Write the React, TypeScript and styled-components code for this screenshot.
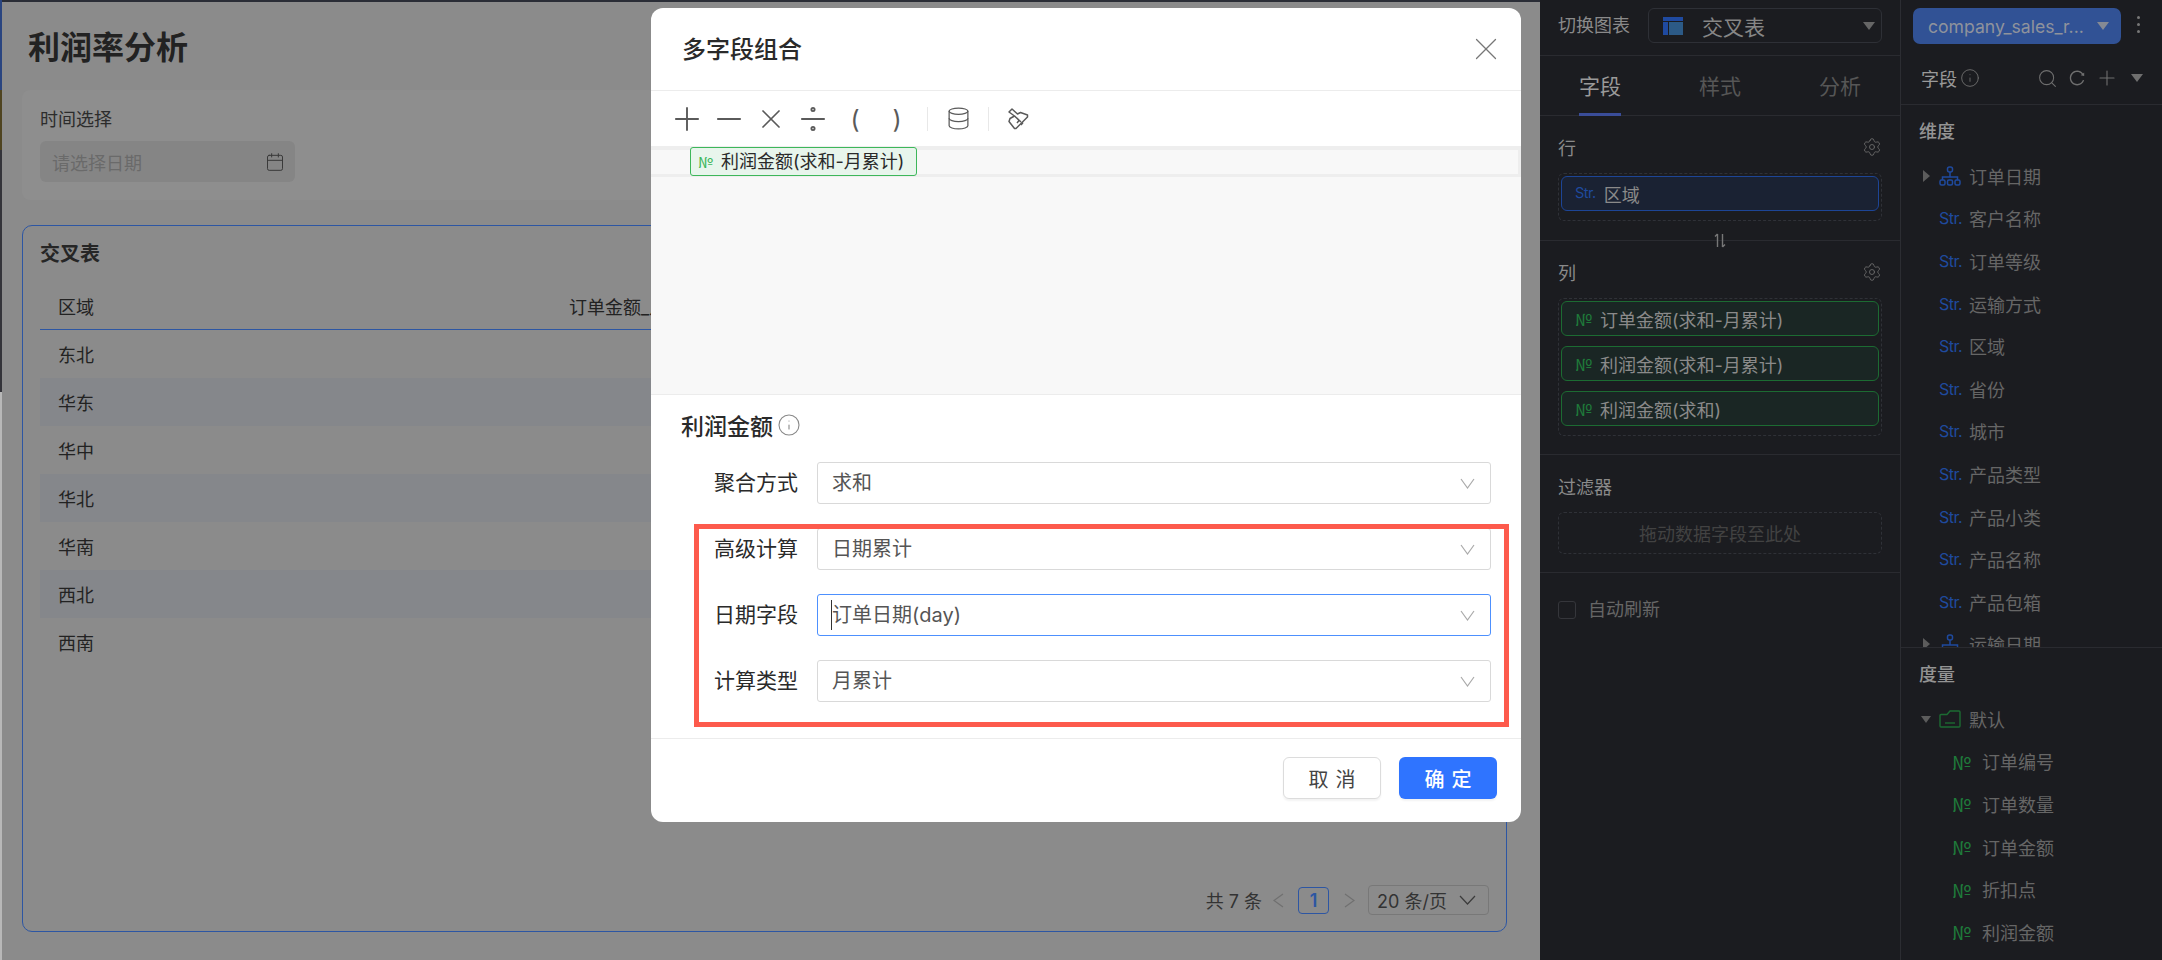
import React from 'react';
import styled, { createGlobalStyle } from 'styled-components';
import { Calendar, Database, Divide, Info, Minus, Plus, Search, Settings, X } from 'lucide-react';
import { AiOutlineReload } from 'react-icons/ai';

const GlobalStyle = createGlobalStyle`
  html, body {
    margin: 0;
    padding: 0;
    background: #1b1c20;
    font-family: Inter, 'Noto Sans CJK SC', sans-serif;
  }
  * { box-sizing: border-box; }
`;

const Page = styled.div`
  display: flex;
  width: 2162px;
  height: 960px;
  overflow: hidden;
`;

const WallpaperEdge = styled.div`
  width: 2px;
  flex: none;
  background: linear-gradient(#2a4580 0 90px, #4f4420 90px 150px, #34343a 150px 392px, #b8b8b8 392px);
`;

const Main = styled.div`
  width: 1538px;
  flex: none;
  position: relative;
  background: #8b8b8b;
  border-top: 2px solid #2a2d36;
  padding: 0 33px 0 20px;
  color: #1f1f1f;
`;

const PageTitle = styled.h1`
  margin: 28px 0 0 6px;
  font-size: 32px;
  line-height: 36px;
  font-weight: 700;
  color: #222;
`;

const FilterCard = styled.div`
  margin-top: 24px;
  height: 110px;
  background: #8e8e8e;
  border-radius: 8px;
  padding: 17px 18px;
`;

const FilterLabel = styled.div`
  font-size: 18px;
  line-height: 26px;
  color: #2c2c2c;
`;

const DateInput = styled.div`
  margin-top: 8px;
  width: 255px;
  height: 41px;
  background: #858585;
  border-radius: 6px;
  padding: 0 10px 0 12px;
  display: flex;
  align-items: center;
  justify-content: space-between;
  font-size: 18px;
  color: #6a6a6a;
  svg { color: #3a3a3a; }
`;

const TableCard = styled.div`
  margin-top: 25px;
  height: 707px;
  border: 1.5px solid #2d56a3;
  border-radius: 10px;
  padding: 13px 16px 0 17px;
  display: flex;
  flex-direction: column;
`;

const CardTitle = styled.div`
  font-size: 20px;
  line-height: 30px;
  font-weight: 700;
  color: #262626;
`;

const TableRow = styled.div<{ $head?: boolean; $striped?: boolean }>`
  display: grid;
  grid-template-columns: 511px 1fr;
  flex: none;
  height: ${p => (p.$head ? '61px' : '48px')};
  padding: ${p => (p.$head ? '13px' : '0')} 0 0 18px;
  align-items: center;
  font-size: 18px;
  color: #222;
  background: ${p => (p.$striped ? '#85878b' : 'transparent')};
  border-bottom: ${p => (p.$head ? '1.5px solid #2d56a3' : 'none')};
`;

const Pagination = styled.div`
  margin-top: auto;
  margin-bottom: 16px;
  display: flex;
  align-items: center;
  justify-content: flex-end;
  font-size: 18px;
  color: #333;
  padding-right: 1px;
`;

const PageArrow = styled.span`
  width: 22px;
  display: flex;
  justify-content: center;
  color: #707070;
  margin: 0 5px;
`;

const PageNumber = styled.span`
  width: 31px;
  height: 27px;
  border: 1.5px solid #2d56a3;
  border-radius: 4px;
  display: flex;
  align-items: center;
  justify-content: center;
  color: #2d56a3;
  font-weight: 600;
  margin: 0 4px;
`;

const PageSize = styled.span`
  width: 121px;
  height: 30px;
  margin-left: 3px;
  border: 1px solid #787878;
  border-radius: 4px;
  padding: 0 12px 0 8px;
  display: flex;
  align-items: center;
  justify-content: space-between;
  svg { color: #3c3c3c; }
`;

const Modal = styled.div`
  position: absolute;
  top: 6px;
  left: 649px;
  width: 870px;
  height: 814px;
  background: #fff;
  border-radius: 12px;
  display: flex;
  flex-direction: column;
  overflow: hidden;
`;

const ModalHeader = styled.div`
  height: 83px;
  flex: none;
  padding: 0 16px 0 31px;
  border-bottom: 1px solid #ececec;
  display: flex;
  align-items: center;
  justify-content: space-between;
  svg { color: #777; }
`;

const ModalTitle = styled.div`
  font-size: 24px;
  line-height: 32px;
  font-weight: 500;
  color: #2a2a2a;
  margin-top: 1px;
`;

const Toolbar = styled.div`
  height: 55px;
  flex: none;
  padding-left: 15px;
  display: flex;
  align-items: center;
  color: #5a5a5a;
`;

const ToolButton = styled.span<{ $width?: number }>`
  width: ${p => p.$width ?? 42}px;
  display: flex;
  justify-content: center;
  font-size: 25px;
  line-height: 30px;
`;

const ToolDivider = styled.span<{ $first?: boolean }>`
  width: 1px;
  height: 24px;
  background: #e8e8e8;
  margin: 0 17px 0 ${p => (p.$first ? 9 : 17)}px;
`;

const EditorArea = styled.div`
  height: 249px;
  flex: none;
  background: #f8f8f8;
  border-bottom: 1px solid #ececec;
`;

const EditorLine = styled.div`
  height: 31px;
  padding: 1px 0 0 39px;
  box-shadow: inset 0 4px #eeeeee, inset 0 -3px #eeeeee, inset -3px 0 #eeeeee;
`;

const FormulaChip = styled.div`
  width: 227px;
  height: 29px;
  background: #e8f5ec;
  border: 1.5px solid #3db75a;
  border-radius: 3px;
  padding-left: 7px;
  display: flex;
  align-items: center;
  gap: 8px;
  font-size: 18px;
  line-height: 26px;
  color: #2a2a2a;
  white-space: nowrap;
`;

const NumberMark = styled.span<{ $color: string; $size?: number }>`
  font-family: 'Noto Sans CJK SC', sans-serif;
  font-size: ${p => p.$size ?? 13}px;
  color: ${p => p.$color};
  line-height: 1;
  flex: none;
`;

const StringMark = styled.span<{ $size?: number }>`
  font-size: ${p => p.$size ?? 14.5}px;
  letter-spacing: -0.5px;
  color: #1f4a9e;
  line-height: 1;
  flex: none;
`;

const ConfigTitle = styled.div`
  margin: 18px 0 0 30px;
  height: 24px;
  display: flex;
  align-items: center;
  gap: 4px;
  font-size: 23px;
  font-weight: 500;
  color: #2a2a2a;
  svg { color: #888; }
`;

const FormList = styled.div`
  margin: 25px 30px 0 0;
  display: flex;
  flex-direction: column;
  gap: 24px;
`;

const FormRow = styled.div`
  display: grid;
  grid-template-columns: 147px 1fr;
  column-gap: 19px;
  align-items: center;
`;

const FormLabel = styled.label`
  text-align: right;
  font-size: 21px;
  line-height: 28px;
  color: #2a2a2a;
`;

const SelectBox = styled.div<{ $focused?: boolean }>`
  height: 42px;
  border: 1.5px solid ${p => (p.$focused ? '#4d90fe' : '#d9d9d9')};
  border-radius: 3px;
  padding: 0 15px 0 14px;
  display: flex;
  align-items: center;
  justify-content: space-between;
  font-size: 20px;
  color: #555;
  svg { color: #aaa; }
`;

const SelectValue = styled.span<{ $caret?: boolean }>`
  line-height: 30px;
  ${p => p.$caret && 'border-left: 1px solid #333; margin-left: -1px;'}
`;

const Highlight = styled.div`
  position: absolute;
  top: 516px;
  left: 43px;
  width: 815px;
  height: 203px;
  border: 5px solid #fd5a4c;
  pointer-events: none;
`;

const ModalFooter = styled.div`
  margin-top: auto;
  height: 84px;
  border-top: 1px solid #ececec;
  padding: 18px 24px 0 0;
  display: flex;
  justify-content: flex-end;
  gap: 18px;
`;

const FooterButton = styled.button<{ $primary?: boolean }>`
  width: 98px;
  height: 42px;
  border: ${p => (p.$primary ? 'none' : '1px solid #dcdcdc')};
  border-radius: 6px;
  background: ${p => (p.$primary ? '#2f74ff' : '#fff')};
  color: ${p => (p.$primary ? '#fff' : '#444')};
  font-family: inherit;
  font-size: 20px;
  font-weight: ${p => (p.$primary ? 500 : 400)};
  letter-spacing: 7px;
  padding: 0 0 0 7px;
  box-shadow: 0 2px 2px rgba(0, 0, 0, 0.05);
`;

const ConfigPanel = styled.aside`
  width: 361px;
  flex: none;
  background: #1b1c20;
  border-right: 1px solid #2c2d32;
  color: #8a8a8a;
`;

const SwitchBar = styled.div`
  height: 56px;
  padding: 8px 18px 0;
  border-bottom: 1px solid #2a2b30;
  display: flex;
  gap: 18px;
`;

const SwitchLabel = styled.div`
  font-size: 18px;
  line-height: 35px;
  white-space: nowrap;
`;

const ChartSelect = styled.div`
  width: 234px;
  height: 35px;
  border: 1px solid #2e3036;
  border-radius: 6px;
  padding: 0 6px 0 14px;
  display: flex;
  align-items: center;
  gap: 19px;
  font-size: 21px;
  color: #868686;
`;

const Triangle = styled.span<{ $right?: boolean; $color?: string; $size?: number; $push?: boolean }>`
  display: block;
  flex: none;
  width: 0;
  height: 0;
  ${p => p.$push && 'margin-left: auto;'}
  ${p => {
    const size = p.$size ?? 6;
    const color = p.$color ?? '#666';
    return p.$right
      ? `border-top: ${size}px solid transparent; border-bottom: ${size}px solid transparent; border-left: ${size + 1}px solid ${color};`
      : `border-left: ${size}px solid transparent; border-right: ${size}px solid transparent; border-top: ${size + 2}px solid ${color};`;
  }}
`;

const Tabs = styled.div`
  height: 60px;
  display: grid;
  grid-template-columns: repeat(3, 120px);
  border-bottom: 1px solid #2a2b30;
`;

const Tab = styled.div<{ $active?: boolean }>`
  justify-self: center;
  width: 42px;
  height: 60px;
  font-size: 21px;
  line-height: 62px;
  text-align: center;
  white-space: nowrap;
  color: ${p => (p.$active ? '#9a9a9a' : '#565656')};
  border-bottom: 3px solid ${p => (p.$active ? '#3a4d99' : 'transparent')};
`;

const Shelf = styled.section<{ $height: number }>`
  height: ${p => p.$height}px;
  padding: 0 18px;
  border-bottom: 1px solid #2a2b30;
  position: relative;
`;

const ShelfHead = styled.div`
  height: 57px;
  padding-top: 5px;
  display: flex;
  align-items: center;
  justify-content: space-between;
  font-size: 18px;
  color: #8a8a8a;
  svg { color: #6a6a6a; margin-top: -1px; }
`;

const DropZone = styled.div<{ $empty?: boolean }>`
  border: 1px dashed #2f3137;
  border-radius: 6px;
  padding: ${p => (p.$empty ? '0' : '2px 2px 9px')};
  height: ${p => (p.$empty ? '42px' : 'auto')};
  display: flex;
  flex-direction: column;
  align-items: ${p => (p.$empty ? 'center' : 'stretch')};
  justify-content: ${p => (p.$empty ? 'center' : 'flex-start')};
  gap: 10px;
  font-size: 18px;
  color: #424242;
`;

const FieldChip = styled.div<{ $kind: 'str' | 'num' }>`
  height: 35px;
  border: 1.5px solid ${p => (p.$kind === 'str' ? '#1d4596' : '#1c6b32')};
  background: ${p => (p.$kind === 'str' ? '#1a2233' : '#1a2624')};
  border-radius: 6px;
  padding-left: 13px;
  display: flex;
  align-items: center;
  gap: 8px;
  font-size: 18px;
  color: #8a8a8a;
  white-space: nowrap;
`;

const SwapHandle = styled.span`
  position: absolute;
  left: 174px;
  bottom: -8px;
  height: 15px;
  display: flex;
  color: #777;
`;

const AutoRefresh = styled.label`
  margin: 27px 0 0 18px;
  display: flex;
  align-items: center;
  gap: 12px;
  font-size: 18px;
  line-height: 20px;
  color: #666;
`;

const CheckBox = styled.span`
  width: 18px;
  height: 18px;
  border: 1px solid #35363b;
  border-radius: 3px;
`;

const DataPanel = styled.aside`
  flex: 1;
  min-width: 0;
  background: #1b1c20;
  color: #666;
`;

const DatasetBar = styled.div`
  height: 52px;
  padding: 8px 0 0 12px;
  display: flex;
  gap: 16px;
`;

const DatasetButton = styled.div`
  width: 208px;
  height: 36px;
  background: #315295;
  border-radius: 7px;
  padding: 0 12px 0 15px;
  display: flex;
  align-items: center;
  justify-content: space-between;
  font-size: 17.6px;
  color: #8f939c;
  white-space: nowrap;
`;

const Kebab = styled.div`
  margin-top: 8px;
  height: 17px;
  display: flex;
  flex-direction: column;
  justify-content: space-between;
  i { width: 3px; height: 3px; border-radius: 50%; background: #777; }
`;

const FieldsHead = styled.div`
  height: 53px;
  padding: 0 10px 0 20px;
  border-bottom: 1px solid #2a2b30;
  display: flex;
  align-items: center;
  font-size: 18px;
  color: #999;
  svg { color: #6f6f6f; }
`;

const HeadTools = styled.div`
  margin-left: auto;
  display: grid;
  grid-template-columns: repeat(4, 30px);
  justify-items: center;
  align-items: center;
`;

const GroupTitle = styled.div`
  height: 49.5px;
  padding-left: 18px;
  display: flex;
  align-items: center;
  font-size: 18px;
  font-weight: 500;
  color: #949494;
`;

const DimensionList = styled.div`
  height: 543px;
  overflow: hidden;
  border-bottom: 1px solid #2a2b30;
`;

const FieldRow = styled.div<{ $indent?: boolean }>`
  height: 42.6px;
  padding-left: ${p => (p.$indent ? '51px' : '38px')};
  position: relative;
  display: flex;
  align-items: center;
  gap: 8px;
  font-size: 18px;
  white-space: nowrap;
`;

const RowCaret = styled.span<{ $open?: boolean }>`
  position: absolute;
  left: ${p => (p.$open ? 20 : 22)}px;
  top: ${p => (p.$open ? 18 : 15)}px;
`;

const MarkSlot = styled.span`
  width: 22px;
  flex: none;
  display: flex;
`;

const TableGlyph = () => (
  <svg width="20" height="18" viewBox="0 0 20 18">
    <rect x="0" y="0" width="20" height="4" fill="#1f4aa0" />
    <rect x="0" y="5" width="5" height="13" fill="#1f4aa0" />
    <rect x="6" y="5" width="14" height="13" fill="#2c5a86" />
  </svg>
);

const TreeGlyph = () => (
  <svg width="22" height="20" viewBox="0 0 22 20" fill="none" stroke="#1f4a9e" strokeWidth="1.5">
    <rect x="8.5" y="1" width="5" height="5" rx="2" />
    <path d="M11 6v5M3.5 14v-3h15v3" />
    <rect x="1" y="14" width="5" height="5" rx="1.5" />
    <rect x="8.5" y="14" width="5" height="5" rx="1.5" />
    <rect x="16" y="14" width="5" height="5" rx="1.5" />
  </svg>
);

const FolderGlyph = () => (
  <svg width="22" height="18" viewBox="0 0 22 18" fill="none" stroke="#1c6b32" strokeWidth="1.4">
    <path d="M1 16V5.5a1 1 0 0 1 1-1h6L11 1h9a1 1 0 0 1 1 1v14a1 1 0 0 1-1 1H2a1 1 0 0 1-1-1z" />
    <path d="M6 13h10" />
  </svg>
);

const BrushGlyph = () => (
  <svg width="22" height="22" viewBox="0 0 22 22" fill="none" stroke="#5a5a5a" strokeWidth="1.5" strokeLinejoin="round">
    <path d="M1 4 4 1l5.500 5 3-1.500 7 2.500v2L8 20.500H6.500L1 13.500l1-3 4.500-2.500z" />
    <path d="M6.500 8 13 14M9 15l2-2.500M13 17l2-2.500" />
  </svg>
);

const SwapGlyph = () => (
  <svg width="12" height="15" viewBox="0 0 12 15" fill="none" stroke="currentColor" strokeWidth="1.4">
    <path d="M3.500 14V1M1 3.500 3.500 1M8.500 1v13M11 11.500 8.500 14" />
  </svg>
);

const VeeGlyph = ({ width, height }: { width: number; height: number }) => (
  <svg width={width} height={height} viewBox={`0 0 ${width} ${height}`} fill="none" stroke="currentColor" strokeWidth="1.2">
    <path d={`M1 1 ${width / 2} ${height - 1} ${width - 1} 1`} />
  </svg>
);

const PagerArrowGlyph = ({ flip }: { flip?: boolean }) => (
  <svg width="11" height="15" viewBox="0 0 11 15" fill="none" stroke="currentColor" strokeWidth="1.2">
    <path d={flip ? 'M1 1l9 6.500-9 6.500' : 'M10 1 1 7.500l9 6.500'} />
  </svg>
);

const regions = ['东北', '华东', '华中', '华北', '华南', '西北', '西南'];
const dimensions = ['客户名称', '订单等级', '运输方式', '区域', '省份', '城市', '产品类型', '产品小类', '产品名称', '产品包箱'];
const measures = ['订单编号', '订单数量', '订单金额', '折扣点', '利润金额'];
const columnChips = ['订单金额(求和-月累计)', '利润金额(求和-月累计)', '利润金额(求和)'];

const App: React.FC = () => (
  <Page>
    <GlobalStyle />
    <WallpaperEdge />
    <Main>
      <PageTitle>利润率分析</PageTitle>
      <FilterCard>
        <FilterLabel>时间选择</FilterLabel>
        <DateInput>
          请选择日期
          <Calendar size={20} strokeWidth={1.2} />
        </DateInput>
      </FilterCard>
      <TableCard>
        <CardTitle>交叉表</CardTitle>
        <TableRow $head>
          <span>区域</span>
          <span>订单金额_月累计</span>
        </TableRow>
        {regions.map((name, i) => (
          <TableRow key={name} $striped={i % 2 === 1}>
            <span>{name}</span>
          </TableRow>
        ))}
        <Pagination>
          共 7 条
          <PageArrow><PagerArrowGlyph /></PageArrow>
          <PageNumber>1</PageNumber>
          <PageArrow><PagerArrowGlyph flip /></PageArrow>
          <PageSize>
            20 条/页
            <VeeGlyph width={17} height={10} />
          </PageSize>
        </Pagination>
      </TableCard>
      <Modal>
        <ModalHeader>
          <ModalTitle>多字段组合</ModalTitle>
          <X size={38} strokeWidth={0.8} />
        </ModalHeader>
        <Toolbar>
          <ToolButton><Plus size={38} strokeWidth={1.2} /></ToolButton>
          <ToolButton><Minus size={38} strokeWidth={1.2} /></ToolButton>
          <ToolButton><X size={32} strokeWidth={1.3} /></ToolButton>
          <ToolButton><Divide size={38} strokeWidth={1.2} /></ToolButton>
          <ToolButton>(</ToolButton>
          <ToolButton>)</ToolButton>
          <ToolDivider $first />
          <ToolButton $width={26}><Database size={25} strokeWidth={1.2} /></ToolButton>
          <ToolDivider />
          <ToolButton $width={26}><BrushGlyph /></ToolButton>
        </Toolbar>
        <EditorArea>
          <EditorLine>
            <FormulaChip>
              <NumberMark $color="#3db75a" $size={15}>№</NumberMark>
              利润金额(求和-月累计)
            </FormulaChip>
          </EditorLine>
        </EditorArea>
        <ConfigTitle>
          利润金额
          <Info size={24} strokeWidth={1.1} />
        </ConfigTitle>
        <FormList>
          <FormRow>
            <FormLabel>聚合方式</FormLabel>
            <SelectBox>
              <SelectValue>求和</SelectValue>
              <VeeGlyph width={15} height={11} />
            </SelectBox>
          </FormRow>
          <FormRow>
            <FormLabel>高级计算</FormLabel>
            <SelectBox>
              <SelectValue>日期累计</SelectValue>
              <VeeGlyph width={15} height={11} />
            </SelectBox>
          </FormRow>
          <FormRow>
            <FormLabel>日期字段</FormLabel>
            <SelectBox $focused>
              <SelectValue $caret>订单日期(day)</SelectValue>
              <VeeGlyph width={15} height={11} />
            </SelectBox>
          </FormRow>
          <FormRow>
            <FormLabel>计算类型</FormLabel>
            <SelectBox>
              <SelectValue>月累计</SelectValue>
              <VeeGlyph width={15} height={11} />
            </SelectBox>
          </FormRow>
        </FormList>
        <Highlight />
        <ModalFooter>
          <FooterButton>取消</FooterButton>
          <FooterButton $primary>确定</FooterButton>
        </ModalFooter>
      </Modal>
    </Main>
    <ConfigPanel>
      <SwitchBar>
        <SwitchLabel>切换图表</SwitchLabel>
        <ChartSelect>
          <TableGlyph />
          交叉表
          <Triangle $push />
        </ChartSelect>
      </SwitchBar>
      <Tabs>
        <Tab $active>字段</Tab>
        <Tab>样式</Tab>
        <Tab>分析</Tab>
      </Tabs>
      <Shelf $height={125}>
        <ShelfHead>
          行
          <Settings size={20} strokeWidth={1.1} />
        </ShelfHead>
        <DropZone>
          <FieldChip $kind="str">
            <StringMark>Str.</StringMark>
            区域
          </FieldChip>
        </DropZone>
        <SwapHandle><SwapGlyph /></SwapHandle>
      </Shelf>
      <Shelf $height={214}>
        <ShelfHead>
          列
          <Settings size={20} strokeWidth={1.1} />
        </ShelfHead>
        <DropZone>
          {columnChips.map(text => (
            <FieldChip key={text} $kind="num">
              <NumberMark $color="#1f7a3a" $size={17}>№</NumberMark>
              {text}
            </FieldChip>
          ))}
        </DropZone>
      </Shelf>
      <Shelf $height={118}>
        <ShelfHead>过滤器</ShelfHead>
        <DropZone $empty>拖动数据字段至此处</DropZone>
      </Shelf>
      <AutoRefresh>
        <CheckBox />
        自动刷新
      </AutoRefresh>
    </ConfigPanel>
    <DataPanel>
      <DatasetBar>
        <DatasetButton>
          company_sales_r...
          <Triangle $color="#858a94" />
        </DatasetButton>
        <Kebab><i /><i /><i /></Kebab>
      </DatasetBar>
      <FieldsHead>
        字段
        <Info size={20} strokeWidth={1.1} style={{ marginLeft: 3 }} />
        <HeadTools>
          <Search size={21} strokeWidth={1.2} />
          <AiOutlineReload size={18} />
          <Plus size={24} strokeWidth={1.1} />
          <Triangle $color="#6f6f6f" />
        </HeadTools>
      </FieldsHead>
      <DimensionList>
        <GroupTitle>维度</GroupTitle>
        <FieldRow>
          <RowCaret><Triangle $right $size={6} $color="#5c5c5c" /></RowCaret>
          <MarkSlot><TreeGlyph /></MarkSlot>
          订单日期
        </FieldRow>
        {dimensions.map(name => (
          <FieldRow key={name}>
            <MarkSlot><StringMark $size={16}>Str.</StringMark></MarkSlot>
            {name}
          </FieldRow>
        ))}
        <FieldRow>
          <RowCaret><Triangle $right $size={6} $color="#5c5c5c" /></RowCaret>
          <MarkSlot><TreeGlyph /></MarkSlot>
          运输日期
        </FieldRow>
      </DimensionList>
      <GroupTitle>度量</GroupTitle>
      <FieldRow>
        <RowCaret $open><Triangle $size={5} $color="#5c5c5c" /></RowCaret>
        <MarkSlot><FolderGlyph /></MarkSlot>
        默认
      </FieldRow>
      {measures.map(name => (
        <FieldRow key={name} $indent>
          <MarkSlot><NumberMark $color="#1f7a3a" $size={19}>№</NumberMark></MarkSlot>
          {name}
        </FieldRow>
      ))}
    </DataPanel>
  </Page>
);

export default App;
